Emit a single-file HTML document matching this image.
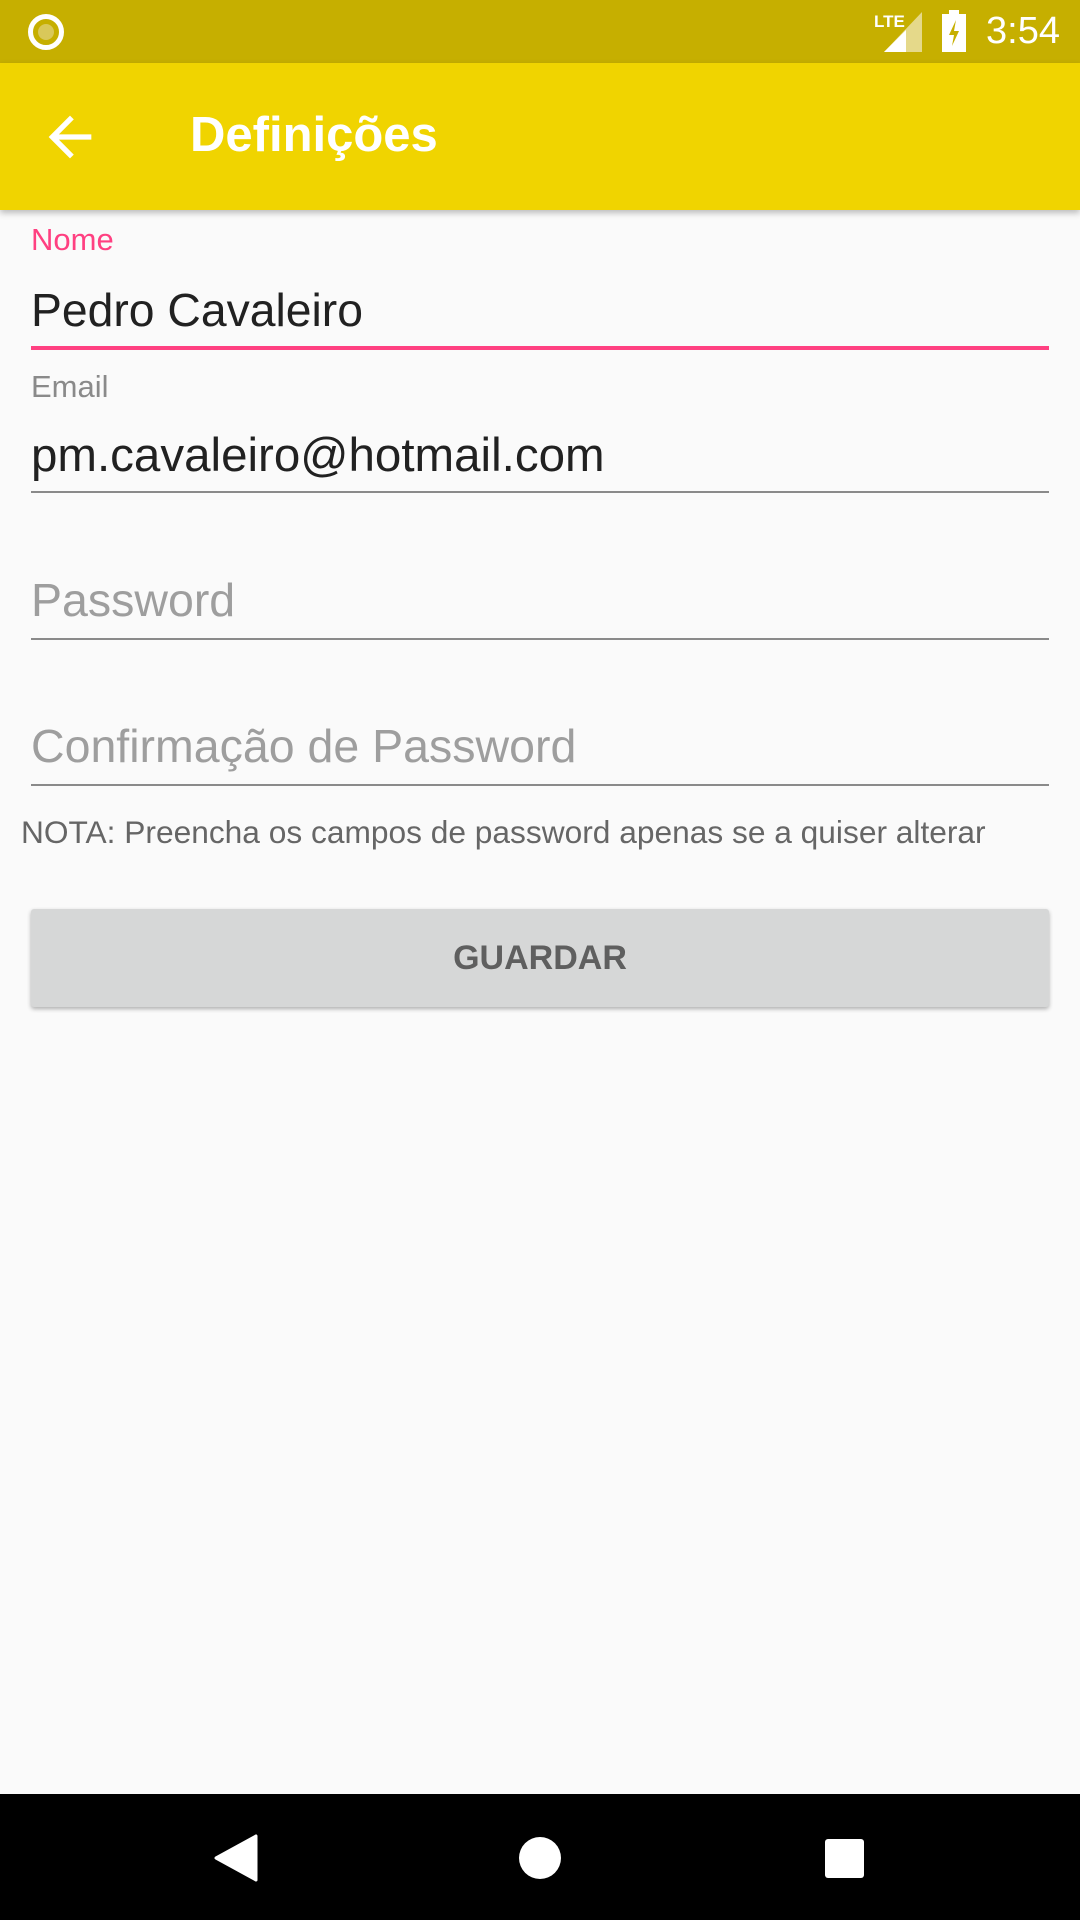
<!DOCTYPE html>
<html><head><meta charset="utf-8"><style>
*{margin:0;padding:0;box-sizing:border-box}
body{width:1080px;height:1920px;background:#fafafa;font-family:"Liberation Sans",sans-serif;position:relative;overflow:hidden}
.abs{position:absolute}
.sb{left:0;top:0;width:1080px;height:63px;background:#c6af00}
.ab{left:0;top:63px;width:1080px;height:147px;background:#f0d400;box-shadow:0 3px 6px rgba(0,0,0,.25)}
.lbl{left:31px;font-size:31px;color:#8a8a8a}
.txt{left:31px;color:#212121}
.ph{left:31px;font-size:46.5px;color:#9e9e9e}
.line{left:31px;width:1018px;height:2px;background:#8a8a8a}
</style></head><body>
<div class="abs sb">
 <div class="abs" style="left:28px;top:14px;width:36px;height:36px;border-radius:50%;border:5px solid #fff;"><div style="width:16px;height:16px;margin:5px;border-radius:50%;background:#d9c85a"></div></div>
 <div class="abs" style="left:874px;top:12px;font-size:17px;font-weight:bold;color:#fff">LTE</div>
 <svg class="abs" style="left:884px;top:12px" width="38" height="40"><polygon points="38,0 38,40 0,40" fill="#e5d98a"/><polygon points="22,18 22,40 0,40" fill="#fff"/></svg>
 <svg class="abs" style="left:942px;top:10px" width="24" height="42"><rect x="0" y="4" width="24" height="38" fill="#fff"/><rect x="7" y="0" width="10" height="5" fill="#fff"/><polygon points="14,10 7,25 12,25 10,36 17,21 12,21" fill="#c6af00"/></svg>
 <div class="abs" style="left:986px;top:10px;font-size:38px;color:#fff">3:54</div>
</div>
<div class="abs ab">
 <svg class="abs" style="left:38px;top:42px" width="64" height="64" viewBox="0 0 24 24"><path d="M20 11H7.83l5.59-5.59L12 4l-8 8 8 8 1.41-1.41L7.83 13H20v-2z" fill="#fff"/></svg>
 <div class="abs" style="left:190px;top:44px;font-size:49px;font-weight:bold;color:#fff">Definições</div>
</div>
<div class="abs lbl" style="top:222px;color:#ff4081">Nome</div>
<div class="abs txt" style="top:283px;font-size:46.3px">Pedro Cavaleiro</div>
<div class="abs line" style="top:346px;height:4px;background:#ff4081"></div>
<div class="abs lbl" style="top:369px">Email</div>
<div class="abs txt" style="top:428px;font-size:47.5px">pm.cavaleiro@hotmail.com</div>
<div class="abs line" style="top:491px"></div>
<div class="abs ph" style="top:573px">Password</div>
<div class="abs line" style="top:638px"></div>
<div class="abs ph" style="top:719px">Confirmação de Password</div>
<div class="abs line" style="top:784px"></div>
<div class="abs" style="left:21px;top:814px;font-size:31.7px;color:#666">NOTA: Preencha os campos de password apenas se a quiser alterar</div>
<div class="abs" style="left:31px;top:909px;width:1018px;height:98px;background:#d6d7d7;border-radius:3px;box-shadow:0 2px 4px rgba(0,0,0,.3);text-align:center;line-height:98px;font-size:34px;font-weight:bold;color:#5f5f5f">GUARDAR</div>
<div class="abs" style="left:0;top:1794px;width:1080px;height:126px;background:#000">
 <svg class="abs" style="left:214px;top:40px" width="44" height="48"><polygon points="42,2 42,46 2,24" fill="#fff" stroke="#fff" stroke-width="3" stroke-linejoin="round"/></svg>
 <div class="abs" style="left:519px;top:43px;width:42px;height:42px;border-radius:50%;background:#fff"></div>
 <div class="abs" style="left:825px;top:45px;width:39px;height:39px;border-radius:3px;background:#fff"></div>
</div>
</body></html>
